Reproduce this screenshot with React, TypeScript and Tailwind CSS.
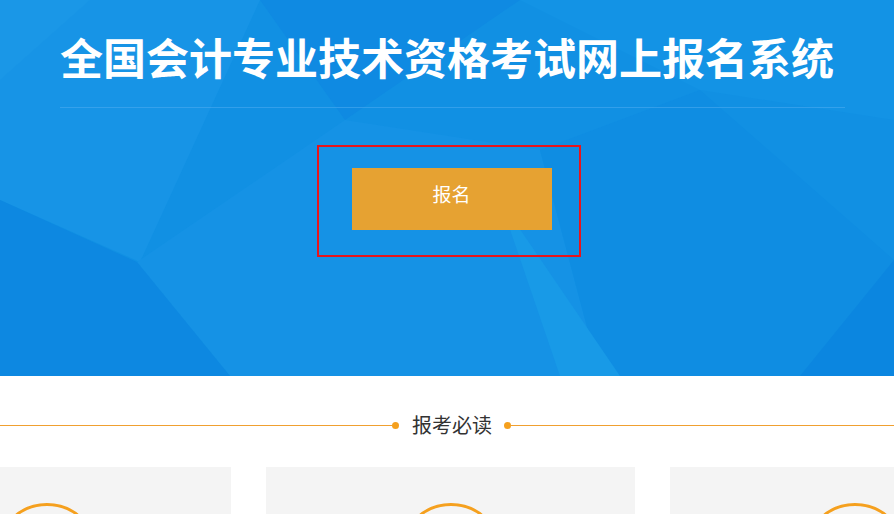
import React from "react";

const CN = { fontFamily: '"Microsoft YaHei", "Noto Sans CJK SC", "Noto Sans", sans-serif' };

function HeroFacets() {
  // background triangles of the banner
  return (
    <svg
      className="absolute inset-0 h-full w-full"
      viewBox="0 0 894 376"
      preserveAspectRatio="none"
    >
      <polygon points="0,0 260,0 140,262 0,200" fill="#1794e6" />
      <polygon points="260,0 520,0 345,120" fill="#0f8ae2" />
      <polygon points="345,120 540,150 600,376 230,376 137,262" fill="#1592e5" />
      <polygon points="0,200 137,262 230,376 0,376" fill="#0d88e1" />
      <polygon points="520,0 894,0 894,120 700,90" fill="#1393e5" />
      <polygon points="540,150 700,90 894,260 894,376 600,376" fill="#0f8de2" />
      <polygon points="500,200 560,376 620,376" fill="#189ae7" />
      <polygon points="800,376 894,260 894,376" fill="#0b86e0" />
      <polygon points="0,0 90,0 0,80" fill="#1a97e7" />
    </svg>
  );
}

function Card() {
  return (
    <div className="flex h-[180px] w-[369px] shrink-0 justify-center bg-[#f4f4f4] pt-[36px]">
      <div className="h-[104px] w-[104px] rounded-full border-[3px] border-[#f5a01e]" />
    </div>
  );
}

export default function App() {
  return (
    <div className="w-full overflow-hidden bg-white" style={CN}>
      {/* Banner */}
      <div className="relative h-[376px] bg-[#1190e3]">
        <HeroFacets />
        <div className="relative flex flex-col items-center pt-[33px]">
          <h1 className="text-[43px] font-bold leading-[46px] text-white">
            全国会计专业技术资格考试网上报名系统
          </h1>
          <div className="mt-[28px] ml-[10px] h-px w-[785px] bg-[#4aaaf0]/60" />
          <div className="mt-[37px] ml-[3px] border-2 border-[#e8141b] pt-[21px] pr-[27px] pb-[25px] pl-[33px]">
            <button className="h-[62px] w-[200px] bg-[#e6a232] pb-[10px] text-[19px] text-white">
              报名
            </button>
          </div>
        </div>
      </div>

      {/* Notice */}
      <div className="mt-[37px] flex h-[24px] items-center">
        <div className="h-px w-[392px] shrink-0 bg-[#f0a030]" />
        <div className="h-[7px] w-[7px] shrink-0 rounded-full bg-[#f5a01e]" />
        <span className="ml-[13px] mr-[12px] text-[20px] leading-[24px] text-[#333]">报考必读</span>
        <div className="h-[7px] w-[7px] shrink-0 rounded-full bg-[#f5a01e]" />
        <div className="h-px flex-1 bg-[#f0a030]" />
      </div>

      <div className="mt-[30px] flex justify-center gap-[35px] pl-[7px]">
        <Card />
        <Card />
        <Card />
      </div>
    </div>
  );
}
